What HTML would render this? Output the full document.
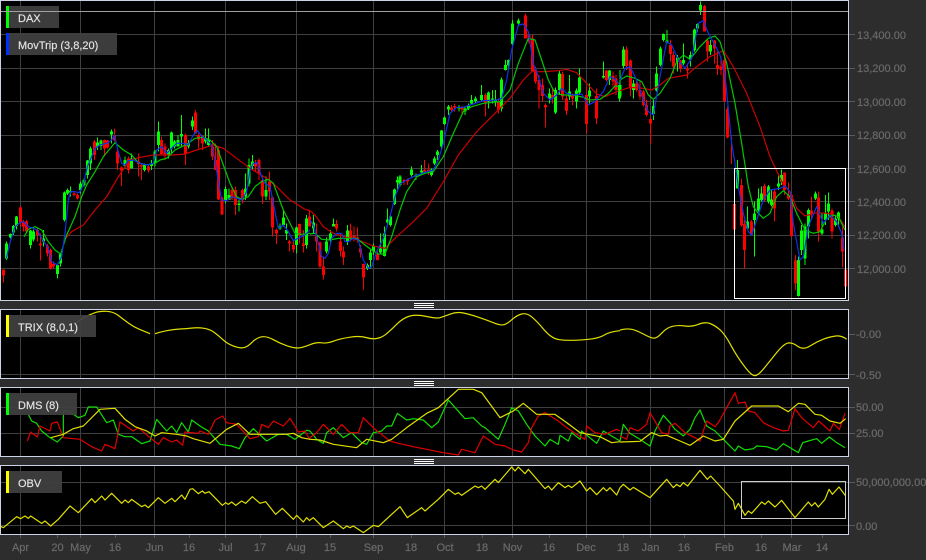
<!DOCTYPE html>
<html><head><meta charset="utf-8"><style>
html,body{margin:0;padding:0;background:#2d2d2d;width:926px;height:560px;overflow:hidden}
svg{position:absolute;left:0;top:0;display:block}
text{font-family:"Liberation Sans",Arial,sans-serif;font-size:11px}
.a text{fill:#6a6a6a;stroke:#6a6a6a;stroke-width:.2}
.l text{fill:#e6e6e6;stroke:#e6e6e6;stroke-width:.15}
.g{stroke:#3f3f3f;stroke-width:1;fill:none;shape-rendering:crispEdges}
.gw{stroke:#0f0;stroke-width:3;fill:none;shape-rendering:crispEdges}
.gb{stroke:#0f0;stroke-width:9;fill:none;shape-rendering:crispEdges}
.rw{stroke:#f00;stroke-width:3;fill:none;shape-rendering:crispEdges}
.rb{stroke:#f00;stroke-width:9;fill:none;shape-rendering:crispEdges}
polyline,.s{fill:none;stroke-width:3.6;stroke-linejoin:round}
.B{stroke:#0a35e8}.G{stroke:#00c800}.R{stroke:#cc0000}.Y{stroke:#e0e000}.G2{stroke:#10dd00}.R2{stroke:#e00000}
</style></head><body>
<svg width="926" height="560" viewBox="0 0 926 560" xmlns="http://www.w3.org/2000/svg">
<rect width="926" height="560" fill="#2d2d2d"/>
<!-- panels -->
<rect x="1" y="1" width="847" height="299" fill="#000"/>
<rect x="1" y="310" width="847" height="68" fill="#000"/>
<rect x="1" y="388" width="847" height="68" fill="#000"/>
<rect x="1" y="466" width="847" height="68" fill="#000"/>
<!-- grid -->
<path class="g" d="M1 34.5H848M1 68.5H848M1 101.5H848M1 135.5H848M1 168.5H848M1 201.5H848M1 235.5H848M1 268.5H848M1 374.5H848M1 407.5H848M1 433.5H848M1 482.5H848M1 525.5H848"/>
<path class="g" d="M20.5 1V300M80.5 1V300M154.5 1V300M225.5 1V300M296.5 1V300M373.5 1V300M444.5 1V300M512.5 1V300M586.5 1V300M650.5 1V300M724.5 1V300M791.5 1V300"/>
<path class="g" d="M20.5 309V378M80.5 309V378M154.5 309V378M225.5 309V378M296.5 309V378M373.5 309V378M444.5 309V378M512.5 309V378M586.5 309V378M650.5 309V378M724.5 309V378M791.5 309V378"/>
<path class="g" d="M20.5 387V456M80.5 387V456M154.5 387V456M225.5 387V456M296.5 387V456M373.5 387V456M444.5 387V456M512.5 387V456M586.5 387V456M650.5 387V456M724.5 387V456M791.5 387V456"/>
<path class="g" d="M20.5 465V534M80.5 465V534M154.5 465V534M225.5 465V534M296.5 465V534M373.5 465V534M444.5 465V534M512.5 465V534M586.5 465V534M650.5 465V534M724.5 465V534M791.5 465V534"/>

<!-- section 1 main -->
<g transform="scale(.33333)">
<path class="gw" d="M19 725V780M31 700V715M40 675V705M49 648V688M91 690V745M100 688V725M131 690V740M172 790V835M182 760V800M193 575V665M202 565V585M212 560V590M241 545V580M252 535V560M262 480V535M271 440V510M292 412V450M303 418V450M334 388V430M375 470V505M394 460V505M434 490V515M455 480V510M465 450V500M475 365V455M505 445V475M514 395V460M524 420V445M534 405V440M545 345V440M566 420V445M577 350V390M617 385V430M625 385V440M676 560V610M687 565V600M717 600V635M737 520V600M747 475V560M757 465V510M798 530V600M840 670V690M850 630V680M860 670V720M889 680V760M919 645V745"/>
<path class="gb" d="M19 730V775M31 702V712M40 678V698M49 650V678M91 692V735M100 695V718M131 715V725M172 795V822M182 762V790M193 578V660M202 570V580M212 573V578M241 550V570M252 540V555M262 482V525M271 445V490M292 428V440M303 422V438M334 395V403M375 480V498M394 475V505M434 495V510M455 490V498M465 455V490M475 395V435M505 450V465M514 397V445M524 425V440M534 420V440M545 402V410M566 430V440M577 362V380M617 415V425M625 418V435M676 567V600M687 585V600M717 610V615M737 565V590M747 495V550M757 485V498M798 570V590M840 680V686M850 652V675M860 690V700M889 682V735M919 655V735"/>
<path class="rw" d="M10 808V848M61 618V680M70 660V695M79 660V700M112 685V725M122 700V782M142 732V770M151 745V808M160 785V805M222 575V590M232 580V598M283 420V480M313 418V470M322 420V445M343 385V425M352 445V510M364 500V558M385 470V520M415 460V530M424 490V540M446 495V518M484 410V465M495 430V480M556 400V495M586 330V395M596 400V445M607 405V450M637 420V480M646 430V510M656 440V600M666 590V645M696 560V600M706 560V645M727 565V610M767 480V515M777 475V540M787 530V612M808 515V600M818 590V710M829 685V732M869 720V755M880 720V758M898 670V730M910 690V758M928 630V680"/>
<path class="rb" d="M10 808V826M61 622V668M70 665V680M79 665V695M112 690V705M122 730V736M142 738V760M151 750V805M160 792V800M222 580V585M232 585V595M283 425V465M313 420V445M322 422V442M343 405V420M352 455V490M364 503V512M385 475V510M415 485V492M424 495V500M446 500V512M484 420V462M495 440V465M556 405V460M586 338V400M596 405V418M607 408V430M637 440V470M646 480V510M656 450V598M666 592V643M696 570V595M706 570V615M727 570V600M767 490V500M777 480V520M787 540V590M808 545V575M818 592V683M829 690V700M869 725V730M880 735V748M898 672V705M910 730V738M928 650V680"/>
<polyline class="R" points="192,720 215,695 250,675 285,630 320,590 355,530 390,480 420,472 460,465 520,465 555,462 590,450 640,435 670,445 710,475 750,505 800,535 830,560 870,600 915,628 930,632"/>
<polyline class="G" points="72,710 85,688 105,680 125,690 145,725 165,750 182,762 200,705 225,650 245,590 260,555 285,515 310,470 345,428 370,450 395,465 415,488 440,495 465,490 480,480 500,475 525,450 545,440 565,430 585,415 610,412 630,420 650,440 670,495 690,550 710,590 725,598 745,590 765,560 785,545 805,538 820,550 835,590 850,630 870,670 885,700 905,703 930,700"/>
<polyline class="B" points="19,775 31,725 45,680 60,668 70,665 85,680 100,685 112,690 125,715 145,745 155,785 172,795 185,770 195,700 205,600 212,575 225,575 238,578 250,555 262,500 275,470 285,445 300,435 320,430 335,420 343,405 355,455 365,490 375,495 385,482 400,480 420,490 440,495 460,490 470,450 485,440 500,460 515,445 530,430 550,430 565,435 580,405 592,392 605,408 620,420 635,435 645,480 655,545 665,600 680,602 695,590 710,595 725,600 740,575 750,510 760,490 772,488 785,530 795,550 810,560 820,610 835,685 850,675 865,695 880,722 900,712 915,705 930,690"/>
</g>

<!-- section 2 main -->
<g transform="translate(310,0) scale(.33333)">
<path class="gw" d="M10 645V700M50 712V760M61 690V730M70 655V680M112 675V735M172 790V810M181 750V805M190 730V765M212 700V760M223 680V770M232 625V675M241 645V680M253 565V615M262 530V575M270 525V560M305 500V530M318 520V540M335 495V520M364 505V530M374 470V495M382 450V480M394 390V445M404 350V375M415 315V345M447 315V335M465 320V345M475 310V330M485 285V315M496 290V310M514 255V305M536 275V325M547 270V310M556 270V320M575 232V335M587 180V212M596 178V210M607 60V135M626 55V80M718 265V310M737 262V342M748 210V285M779 225V300M799 265V325M808 205V285M839 250V310M880 185V235M899 210V255M928 250V305"/>
<path class="gb" d="M10 668V685M50 725V755M61 700V722M70 672V680M112 692V725M172 795V805M181 758V780M190 738V755M212 745V758M223 700V768M232 658V668M241 650V675M253 568V612M262 540V548M270 530V555M305 508V525M318 525V530M335 512V518M364 508V525M374 475V490M382 455V465M394 392V440M404 352V372M415 320V328M447 322V326M465 325V335M475 318V325M485 300V310M496 295V303M514 285V300M536 278V305M547 295V300M556 298V305M575 238V325M587 195V210M596 180V196M607 70V132M626 62V70M718 280V295M737 270V338M748 220V270M779 275V290M799 272V305M808 232V278M839 272V290M880 228V233M899 212V240M928 255V295"/>
<path class="rw" d="M19 670V755M30 725V805M40 770V838M79 660V695M91 700V770M100 740V795M122 670V725M132 680V725M142 683V728M151 735V772M160 790V870M202 755V782M282 535V555M292 535V555M344 480V520M355 490V525M425 315V335M434 310V335M456 318V345M526 280V350M566 295V340M646 40V115M657 100V130M667 105V215M676 200V250M687 225V325M697 235V305M706 310V382M727 262V310M758 215V300M769 285V345M788 280V315M829 260V400M859 265V372M889 210V245M909 215V260M918 225V285"/>
<path class="rb" d="M19 707V725M30 728V800M40 800V825M79 672V685M91 725V753M100 755V772M122 692V712M132 708V715M142 712V718M151 745V758M160 792V832M202 762V780M282 540V545M292 538V545M344 510V518M355 508V518M425 322V330M434 318V322M456 322V328M526 285V310M566 305V330M646 47V115M657 105V125M667 115V213M676 208V245M687 240V270M697 255V288M706 315V322M727 285V295M758 222V290M769 295V333M788 285V295M829 285V372M859 288V355M889 212V240M909 228V245M918 235V270"/>
<polyline class="R" points="0,632 15,645 40,680 70,700 110,712 145,720 190,738 225,745 260,710 310,665 350,625 400,545 445,465 500,395 560,335 600,295 640,240 665,215 700,215 745,212 770,208 800,218 830,250 860,282 885,290 920,275 930,272"/>
<polyline class="G" points="0,702 15,700 35,718 60,720 85,715 115,715 140,715 165,735 185,750 205,762 225,762 245,710 270,630 290,575 320,530 345,520 370,515 400,470 430,400 460,335 485,320 520,310 570,305 600,270 625,190 655,115 675,120 690,165 715,240 735,280 760,285 790,285 820,292 840,300 870,298 895,280 915,258 930,260"/>
<polyline class="B" points="0,660 12,680 22,720 35,770 45,775 55,760 65,715 80,700 95,700 105,725 115,725 130,715 145,720 160,780 175,805 185,800 200,755 220,715 240,650 255,590 270,552 290,540 310,530 340,518 370,510 385,480 400,430 420,340 440,322 460,322 480,315 520,302 560,300 575,295 590,240 605,150 625,75 640,72 655,95 670,190 685,230 700,280 720,300 740,285 755,265 770,280 790,285 815,282 835,315 855,305 880,275 900,230 915,238 930,255"/>
</g>

<!-- section 3 main -->
<g transform="translate(620,0) scale(.33333)">
<path class="gw" d="M0 210V295M10 140V205M40 240V295M100 300V360M110 200V275M121 140V200M131 100V125M141 90V130M172 165V215M191 130V195M212 155V200M223 85V155M232 70V95M241 5V45M272 120V165M352 480V565M383 620V688M404 605V770M415 565V635M424 560V605M445 555V610M455 570V620M475 520V570M484 508V555M535 770V890M545 675V765M555 670V795M565 625V715M586 575V600M606 640V705M616 585V675M625 578V660M646 650V680M655 635V680"/>
<path class="gb" d="M0 255V290M10 148V198M40 250V270M100 318V342M110 220V272M121 145V195M131 102V120M141 122V128M172 172V185M191 180V190M212 165V178M223 88V150M232 72V85M241 15V32M272 135V155M352 510V565M383 665V685M404 640V660M415 595V632M424 580V600M445 560V605M455 598V615M475 550V560M484 525V545M535 780V888M545 692V750M555 680V775M565 630V680M586 580V595M606 688V700M616 640V660M625 610V635M646 655V675M655 638V655"/>
<path class="rw" d="M19 140V210M31 178V290M50 245V275M60 245V300M70 270V320M80 300V350M91 350V432M151 120V185M161 155V220M182 180V218M202 190V235M253 15V95M263 115V185M283 120V190M293 155V225M303 170V225M313 165V305M323 320V415M334 410V492M344 610V690M364 535V680M374 660V805M394 660V705M434 550V605M464 565V665M493 518V585M505 548V600M515 585V712M526 765V870M575 590V660M595 575V725M636 625V715M667 680V802M677 808V865"/>
<path class="rb" d="M19 148V198M31 182V265M50 250V270M60 270V290M70 275V315M80 315V345M91 357V370M151 135V162M161 165V200M182 182V205M202 205V212M253 18V95M263 122V155M283 122V145M293 195V205M303 200V210M313 180V305M323 327V412M344 612V688M364 555V675M374 672V750M394 665V705M434 558V600M464 575V625M493 518V570M505 585V595M515 585V708M526 782V850M575 632V642M595 592V695M636 632V695M667 712V755M677 808V860"/>
<polyline class="R" points="0,272 30,262 70,265 95,270 120,255 145,235 200,225 230,200 270,170 310,152 340,200 380,280 420,380 450,470 490,555 510,575 530,625 555,648 590,638 625,640 655,650 675,680"/>
<polyline class="G" points="0,240 20,228 45,235 65,245 85,285 100,298 120,280 150,235 170,185 190,165 210,178 240,140 265,115 285,108 300,125 320,190 345,310 365,430 385,560 400,620 415,640 430,655 450,640 470,590 490,572 510,590 530,640 555,690 580,700 600,695 620,655 640,645 655,650 675,690"/>
<polyline class="B" points="0,240 15,205 30,200 50,240 70,300 85,335 100,345 120,230 140,125 155,135 175,180 195,205 215,175 235,70 250,62 265,100 285,135 300,165 315,225 335,430 345,490 355,560 370,640 385,695 395,705 410,660 430,600 450,570 480,565 495,558 510,575 520,670 540,780 550,770 565,680 590,620 610,670 630,645 650,665 665,700 672,750"/>
</g>
<rect x="734.5" y="168.5" width="111" height="130" fill="none" stroke="#fff" stroke-width="1" shape-rendering="crispEdges"/>

<!-- lower panels section 1 -->
<g transform="translate(0,296) scale(.33333)">
<path class="s Y" d="M230 80Q240 72 255 63.5Q270 55 285 50Q300 45 320 46Q340 47 355 58.5Q370 70 385 81Q400 92 415 98.5Q430 105 450 113"/>
<path class="s Y" d="M465 113Q480 108 500 104Q520 100 540 99Q560 98 577.5 96Q595 94 612.5 97Q630 100 642.5 109Q655 118 667.5 130Q680 142 697.5 149Q715 156 727.5 155.5Q740 155 755 140Q770 125 785 122.5Q800 120 820 131Q840 142 860 149Q880 156 892.5 156Q905 156 930 146"/>
<polyline class="G2" points="85,355 95,375 110,382 125,405 150,425 172,438 190,420 190,345 205,345 235,365 255,358 265,333 290,333 320,380 340,372 355,415 375,422 395,422 425,443 450,435 470,370 500,405 515,390 530,410 545,380 565,408 575,372 600,390 625,405 660,445 695,450 718,458 735,425 760,398 800,435 835,415 860,415 885,430 920,403 930,405"/>
<polyline class="R2" points="82,435 92,408 112,423 120,390 150,405 155,382 172,378 190,425 240,430 275,452 305,465 315,445 345,458 360,378 400,405 415,395 450,425 475,445 490,425 515,438 530,432 548,448 555,408 595,412 600,405 625,415 645,372 668,360 680,380 710,385 750,428 775,422 785,385 805,395 820,375 850,390 870,367 895,408 915,405 930,432"/>
<polyline class="Y" points="152,425 190,415 220,398 250,390 300,340 345,337 375,370 405,392 440,405 465,420 485,410 530,415 560,420 580,428 630,442 650,425 680,400 715,382 750,415 800,415 860,415 880,412 905,425 930,430"/>
<polyline class="Y" points="0,690 10,695 50,662 62,668 75,660 85,667 92,660 125,682 135,675 152,690 175,670 210,630 235,650 275,608 285,620 305,600 315,612 335,592 365,622 375,612 385,620 395,610 425,632 435,627 445,635 475,605 495,622 515,607 525,617 545,597 555,610 570,580 578,578 595,593 607,585 615,592 627,587 667,628 677,620 685,625 695,618 707,628 725,615 737,622 757,602 780,622 797,617 827,655 847,637 880,670 890,658 910,678 920,665 930,675"/>
</g>
<!-- lower panels section 2 -->
<g transform="translate(310,296) scale(.33333)">
<path class="s Y" d="M0 146Q20 138 35 140.5Q50 143 70 135.5Q90 128 120 123.5Q150 119 167.5 124.5Q185 130 200 127.5Q215 125 227.5 115Q240 105 260 85Q280 65 300 60Q320 55 350 61.5Q380 68 390 65Q400 62 420 54.5Q440 47 460 51Q480 55 505 63.5Q530 72 550 80Q570 88 580 86.5Q590 85 605 71.5Q620 58 635 54Q650 50 665 62.5Q680 75 702.5 101.5Q725 128 747.5 131Q770 134 800 132.5Q830 131 850 128Q870 125 885 116Q900 107 930 104"/>
<polyline class="G2" points="0,405 20,430 40,442 50,410 70,395 100,425 125,410 155,440 170,445 190,410 215,405 230,390 245,390 262,352 290,372 310,368 340,372 365,395 385,378 415,312 440,340 465,368 490,365 515,390 525,395 565,430 585,385 605,335 625,345 650,385 675,420 705,450 720,430 745,445 750,418 775,435 785,410 810,430 815,405 860,442 880,405 930,435"/>
<polyline class="R2" points="0,425 20,410 40,385 70,415 95,385 120,410 145,410 160,365 195,400 240,435 265,442 310,452 350,460 400,470 445,477 455,460 495,470 505,450 520,420 555,445 585,450 610,462 635,468 655,440 665,395 685,360 705,350 745,375 770,395 800,415 825,430 830,390 855,410 885,415 920,400 930,405"/>
<polyline class="Y" points="0,430 30,432 70,445 140,455 170,430 220,440 245,430 290,395 350,352 385,335 445,280 490,280 515,290 570,365 610,345 640,322 680,355 735,355 770,380 810,410 870,422 905,440 930,437"/>
<polyline class="Y" points="0,672 10,665 40,695 70,675 100,698 110,690 120,695 130,690 160,710 190,688 205,692 270,632 292,665 335,635 345,645 385,610 415,580 435,595 445,590 455,598 495,570 505,575 515,570 525,580 555,550 565,560 605,513 615,525 625,513 645,533 655,520 705,578 715,570 725,582 745,560 765,575 775,568 785,575 810,555 830,585 840,575 860,596 880,575 890,585 900,575 920,597 930,575"/>
</g>
<!-- lower panels section 3 -->
<g transform="translate(620,296) scale(.33333)">
<path class="s Y" d="M0 102Q20 97 35 100Q50 103 70 114Q90 125 100 126.5Q110 128 125 111.5Q140 95 157.5 91Q175 87 195 90Q215 93 235 85Q255 77 270 82.5Q285 88 300 101.5Q315 115 332.5 147.5Q350 180 372.5 210Q395 240 405 239Q415 238 432.5 216.5Q450 195 470 170Q490 145 502.5 141.5Q515 138 532.5 150.5Q550 163 570 150Q590 137 610 129.5Q630 122 647.5 120Q665 118 680 130"/>
<polyline class="G2" points="0,435 10,385 30,412 60,430 90,450 105,405 130,358 150,380 165,400 190,420 210,400 225,365 240,342 260,390 285,405 320,440 345,465 355,450 375,462 400,458 410,450 440,452 470,462 490,443 535,470 548,440 565,435 590,428 605,442 628,423 650,440 675,455"/>
<polyline class="R2" points="0,420 20,430 30,395 55,405 80,385 90,350 125,410 145,415 150,390 165,382 195,410 225,425 240,435 260,375 285,392 295,380 345,290 355,322 375,318 385,345 405,350 430,380 460,395 490,405 505,403 525,338 545,365 580,395 596,375 630,405 640,382 658,400 675,352"/>
<polyline class="Y" points="0,438 60,436 95,410 120,420 140,418 180,435 210,448 250,420 285,435 310,430 345,375 395,330 430,330 475,330 505,347 535,322 555,325 585,355 605,358 630,375 660,382 677,368"/>
<polyline class="Y" points="0,575 10,565 30,582 40,574 90,605 140,550 160,575 170,565 180,572 190,560 203,570 240,523 262,550 272,540 300,570 340,615 345,640 355,622 375,658 385,645 395,652 425,618 435,625 445,615 465,633 485,613 525,665 565,618 575,630 585,620 595,633 615,610 627,580 637,595 657,573 677,600"/>
</g>
<rect x="741.5" y="481.5" width="104" height="37" fill="none" stroke="#ccc" stroke-width="1" shape-rendering="crispEdges"/>

<!-- borders -->
<g fill="none" stroke="#cdd3e6" stroke-width="1" shape-rendering="crispEdges">
<rect x="0.5" y="0.5" width="848" height="300"/>
<rect x="0.5" y="309.5" width="848" height="69"/>
<rect x="0.5" y="387.5" width="848" height="69"/>
<rect x="0.5" y="465.5" width="848" height="69"/>
</g>
<!-- splitters -->
<path d="M414 303.5H434M414 305.5H434M414 307.5H434M414 381.5H434M414 383.5H434M414 385.5H434M414 459.5H434M414 461.5H434M414 463.5H434" stroke="#fff" stroke-width="1" shape-rendering="crispEdges"/>
<!-- ticks -->
<path d="M849 34.5H855M849 68.5H855M849 101.5H855M849 135.5H855M849 168.5H855M849 201.5H855M849 235.5H855M849 268.5H855M849 334.5H855M849 374.5H855M849 407.5H855M849 433.5H855M849 482.5H855M849 525.5H855M20.5 535V538M57.5 535V538M80.5 535V538M115.5 535V538M154.5 535V538M189.5 535V538M225.5 535V538M260.5 535V538M296.5 535V538M330.5 535V538M373.5 535V538M411.5 535V538M444.5 535V538M482.5 535V538M512.5 535V538M549.5 535V538M586.5 535V538M623.5 535V538M650.5 535V538M684.5 535V538M724.5 535V538M761.5 535V538M791.5 535V538M822.5 535V538" stroke="#5a5a5a" stroke-width="1" shape-rendering="crispEdges"/>
<!-- axis labels -->
<g class="a">
<text x="857" y="39">13,400.00</text><text x="857" y="72">13,200.00</text><text x="857" y="106">13,000.00</text><text x="857" y="139">12,800.00</text><text x="857" y="173">12,600.00</text><text x="857" y="206">12,400.00</text><text x="857" y="239">12,200.00</text><text x="857" y="273">12,000.00</text>
<text x="856" y="338">-0.00</text><text x="856" y="379">-0.50</text>
<text x="856" y="411">50.00</text><text x="856" y="437">25.00</text>
<text x="856" y="486">50,000,000.00</text><text x="856" y="530">0.00</text>
<g text-anchor="middle">
<text x="20.5" y="551">Apr</text><text x="57.5" y="551">20</text><text x="80.5" y="551">May</text><text x="115" y="551">16</text><text x="154.5" y="551">Jun</text><text x="189" y="551">16</text><text x="225.5" y="551">Jul</text><text x="260" y="551">17</text><text x="296" y="551">Aug</text><text x="330" y="551">15</text><text x="373.5" y="551">Sep</text><text x="411" y="551">18</text><text x="445" y="551">Oct</text><text x="482" y="551">18</text><text x="512.5" y="551">Nov</text><text x="549" y="551">16</text><text x="586" y="551">Dec</text><text x="623" y="551">18</text><text x="650.5" y="551">Jan</text><text x="684" y="551">16</text><text x="724.5" y="551">Feb</text><text x="761" y="551">16</text><text x="792" y="551">Mar</text><text x="822" y="551">14</text>
</g></g>
<!-- legends -->
<g class="l">
<rect x="6" y="6" width="53" height="22" fill="#404040" fill-opacity=".94"/><rect x="6" y="6" width="3" height="22" fill="#0f0"/><text x="18" y="22">DAX</text>
<rect x="6" y="33" width="111" height="22" fill="#404040" fill-opacity=".94"/><rect x="6" y="33" width="3" height="22" fill="#0030ff"/><text x="18" y="49">MovTrip (3,8,20)</text>
<rect x="6" y="315" width="90" height="22" fill="#404040" fill-opacity=".94"/><rect x="6" y="315" width="3" height="22" fill="#ff0"/><text x="18" y="331">TRIX (8,0,1)</text>
<rect x="6" y="393" width="71" height="22" fill="#404040" fill-opacity=".94"/><rect x="6" y="393" width="3" height="22" fill="#0f0"/><text x="18" y="409">DMS (8)</text>
<rect x="6" y="471" width="56" height="22" fill="#404040" fill-opacity=".94"/><rect x="6" y="471" width="3" height="22" fill="#ff0"/><text x="18" y="487">OBV</text>
</g>
<path d="M1 11.5H848" stroke="#a0a0a0" stroke-width="1" shape-rendering="crispEdges"/>
</svg>
</body></html>
